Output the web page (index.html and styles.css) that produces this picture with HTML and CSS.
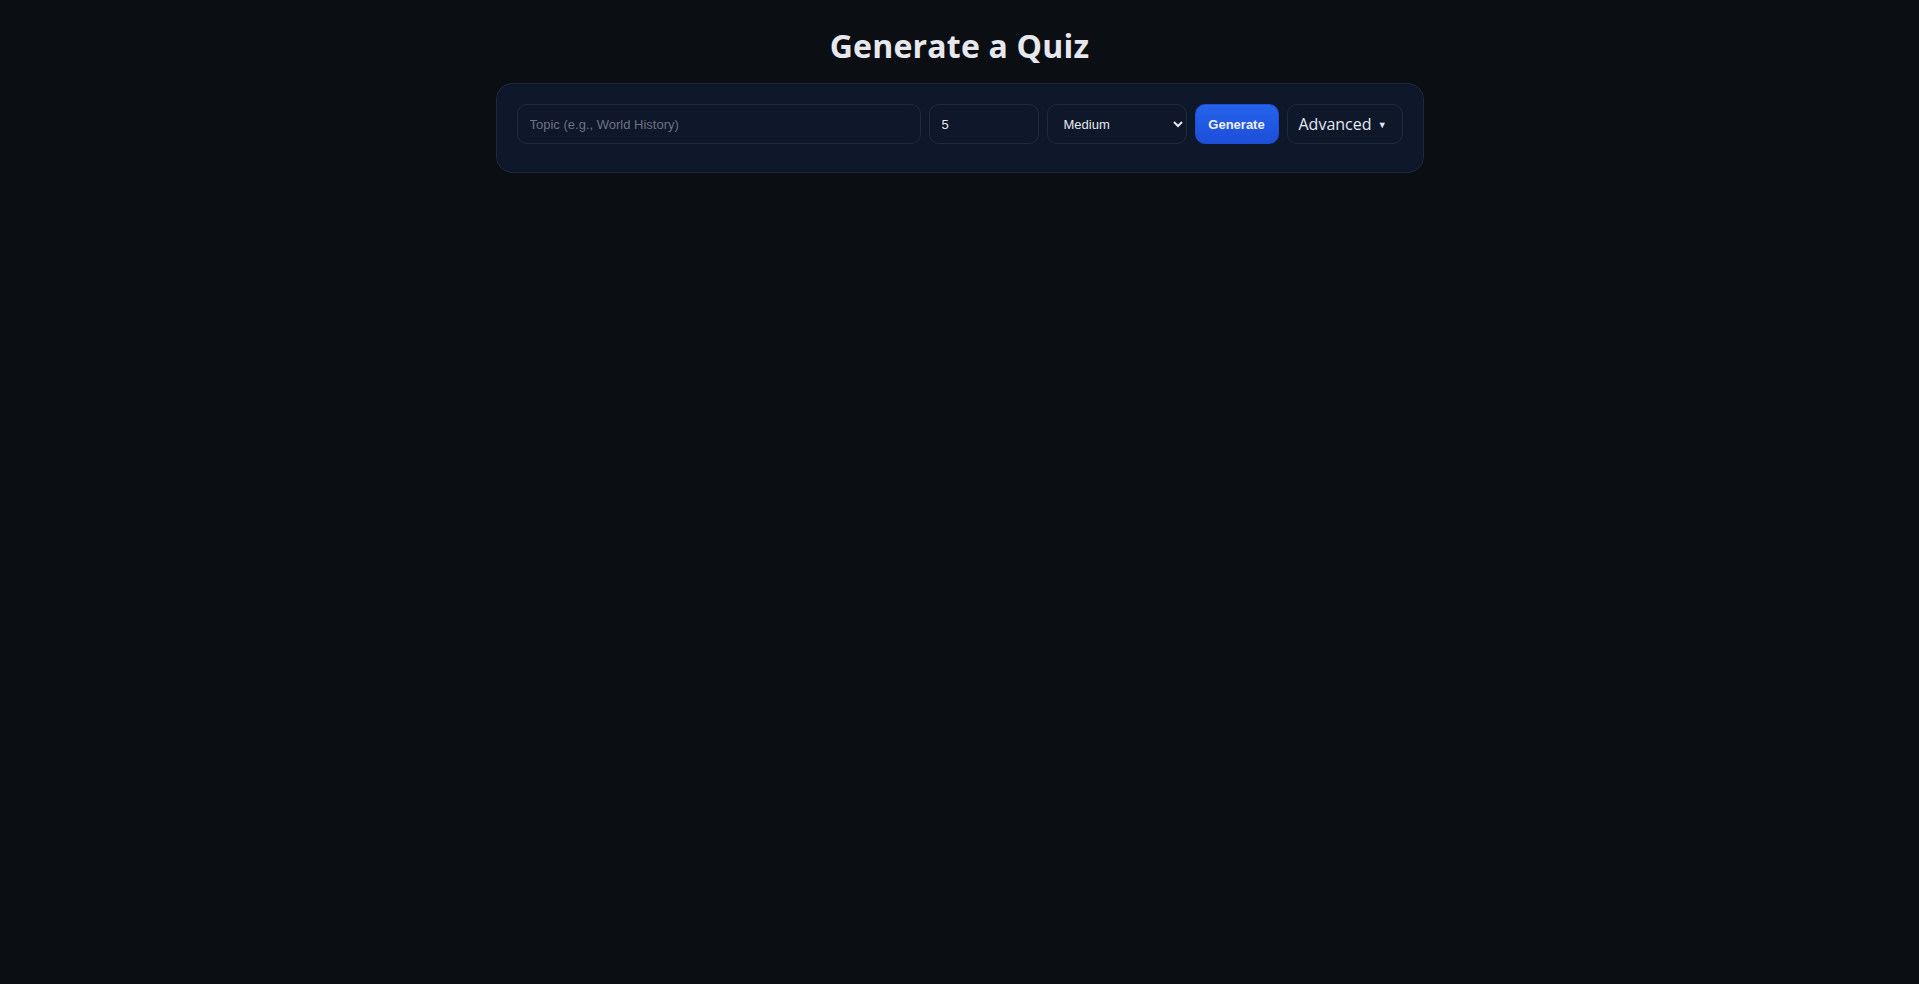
FILE: index.html
```html
<!DOCTYPE html>
<html lang="en">
<head>
<meta charset="utf-8">
<title>Generate a Quiz</title>
<link rel="stylesheet" href="styles.css">
</head>
<body>
<main class="page">
  <h1 class="title">Generate a Quiz</h1>
  <section class="card">
    <form class="row">
      <input class="field topic" type="text" placeholder="Topic (e.g., World History)">
      <input class="field count" type="number" value="5">
      <select class="field level">
        <option>Easy</option>
        <option selected>Medium</option>
        <option>Hard</option>
      </select>
      <button class="btn-generate" type="button">Generate</button>
      <button class="btn-advanced" type="button">Advanced <span class="caret">▼</span></button>
    </form>
    <div class="advanced-panel"></div>
  </section>
</main>
</body>
</html>
```

FILE: styles.css
```css
* { box-sizing: border-box; }
html, body { margin: 0; padding: 0; }
body {
  background: #0b0e13;
  color: #e5e7eb;
  font-family: "Open Sans", "Noto Sans", sans-serif;
  min-height: 100vh;
}
.page {
  width: 928px;
  margin: 0 auto;
  padding-top: 26px;
}
.title {
  margin: 0 0 17px;
  font-size: 32px;
  font-weight: 700;
  line-height: 40px;
  letter-spacing: 0.2px;
  text-align: center;
  color: #e6e8ee;
}
.card {
  background: #0f172a;
  border: 1px solid #1e293b;
  border-radius: 16px;
  padding: 20px 20px 20px;
}
.row {
  display: flex;
  gap: 8px;
  margin: 0;
}
.field {
  height: 40px;
  background: #0f172a;
  border: 1px solid #1f2a3c;
  border-radius: 10px;
  color: #e5e7eb;
  font-family: "Liberation Sans", Arial, sans-serif;
  font-size: 13px;
  padding: 0 12px;
  outline: none;
}
.field::placeholder { color: #6b7280; }
.topic { flex: 1; min-width: 0; }
.count { width: 110px; }
.count::-webkit-inner-spin-button,
.count::-webkit-outer-spin-button { -webkit-appearance: none; margin: 0; }
.level {
  width: 140px;
  color-scheme: dark;
}
.btn-generate {
  width: 84px;
  height: 40px;
  border: 1px solid #1d4ed8;
  border-radius: 10px;
  background: linear-gradient(180deg, #2563eb, #1d4ed8);
  color: #eef2ff;
  font-family: "Liberation Sans", Arial, sans-serif;
  font-size: 13px;
  font-weight: 700;
  padding: 0;
}
.btn-advanced {
  width: 116px;
  height: 40px;
  background: #0f172a;
  border: 1px solid #1f2a3c;
  border-radius: 10px;
  color: #e2e8f0;
  font-family: "Open Sans", sans-serif;
  font-size: 16px;
  padding: 0 0 0 11px;
  text-align: left;
  white-space: nowrap;
}
.caret { font-size: 9px; vertical-align: 2px; margin-left: 2px; }
.advanced-panel { height: 8px; }
```
